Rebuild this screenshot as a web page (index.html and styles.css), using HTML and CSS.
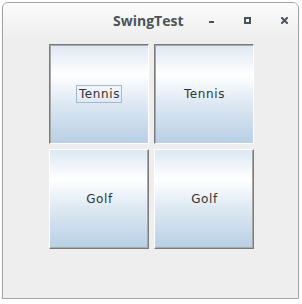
FILE: index.html
```html
<!DOCTYPE html>
<html>
<head>
<meta charset="utf-8">
<link rel="stylesheet" href="styles.css">
</head>
<body>
<div class="window">
  <div class="titlebar">
    <span class="title">SwingTest</span>
    <svg class="ico ico-min" width="6" height="7" viewBox="0 0 6 7"><rect x="0" y="4" width="5" height="2" fill="#4b5458"/></svg>
    <svg class="ico ico-max" width="7" height="7" viewBox="0 0 7 7"><rect x="1" y="1" width="5" height="5" fill="none" stroke="#4b5458" stroke-width="2"/></svg>
    <svg class="ico ico-close" width="7" height="7" viewBox="0 0 7 7"><path d="M1 1 L6 6 M6 1 L1 6" stroke="#4b5458" stroke-width="2" stroke-linecap="square"/></svg>
  </div>
  <div class="content">
    <div class="grid">
      <div class="btn pressed"><span class="label focus">Tennis</span></div>
      <div class="btn pressed"><span class="label">Tennis</span></div>
      <div class="btn"><span class="label">Golf</span></div>
      <div class="btn"><span class="label">Golf</span></div>
    </div>
  </div>
</div>
</body>
</html>
```

FILE: styles.css
```css
html, body {
  margin: 0;
  padding: 0;
  background: #ffffff;
}

.window {
  margin: 2px 0 0 2px;
  width: 295px;
  height: 295px;
  border: 1px solid #a4a4a4;
  border-radius: 6px 6px 0 0;
  background: #eeeeee;
  box-shadow: 0 1px 1px rgba(0,0,0,0.35);
  display: flex;
  flex-direction: column;
  overflow: hidden;
}

.titlebar {
  height: 34px;
  flex: none;
  display: flex;
  align-items: center;
  background: linear-gradient(#fbfbfb, #efefef);
  padding-top: 1px;
  box-sizing: border-box;
}

.title {
  font-family: "Open Sans", "DejaVu Sans", sans-serif;
  font-weight: 700;
  font-size: 14px;
  color: #4b5458;
  margin-left: 110px;
  width: 96px;
  line-height: 20px;
}

.ico { display: block; flex: none; }
.ico-min { margin-left: 0; }
.ico-max { margin-left: 29px; }
.ico-close { margin-left: 30px; }

.content {
  flex: 1;
  padding: 7px 0 0 46px;
}

.grid {
  display: grid;
  grid-template-columns: 100px 100px;
  grid-template-rows: 100px 100px;
  gap: 5px;
}

.btn {
  box-sizing: border-box;
  display: flex;
  align-items: center;
  justify-content: center;
  border: 1px solid;
  border-color: #ffffff #7a7a7a #7a7a7a #ffffff;
  box-shadow: inset -1px -1px 0 #a9a9a9;
  background: linear-gradient(#dde8f3 0%, #ffffff 30%, #dde8f3 60%, #b8cfe5 100%);
}

.btn.pressed {
  border-color: #7a7a7a #ffffff #ffffff #7a7a7a;
  box-shadow: inset 1px 1px 0 #a9a9a9;
}

.label {
  font-family: "DejaVu Sans", sans-serif;
  font-size: 12px;
  letter-spacing: 0.6px;
  color: #333333;
  line-height: 14px;
  padding: 1px 1px 1px 2px;
  border: 1px solid transparent;
}

.label.focus {
  border-color: #a3b8cc;
}
```
